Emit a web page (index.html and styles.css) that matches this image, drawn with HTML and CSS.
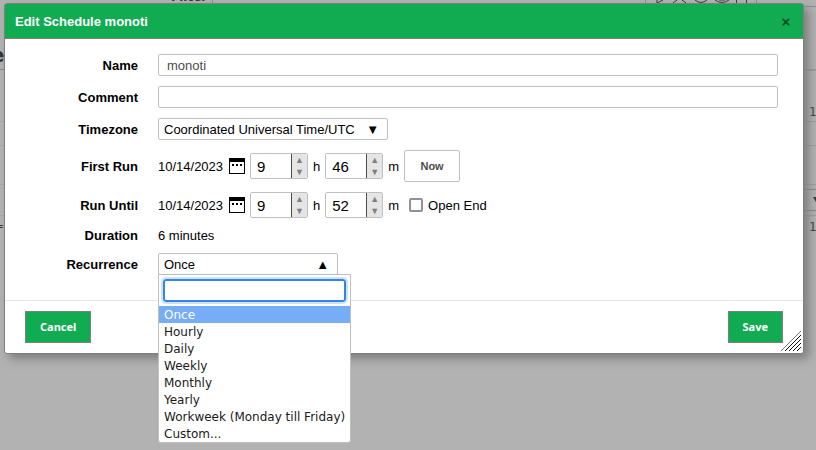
FILE: index.html
```html
<!DOCTYPE html>
<html lang="en">
<head>
<meta charset="utf-8">
<title>Edit Schedule monoti</title>
<link rel="stylesheet" href="styles.css">
</head>
<body>
<div class="backdrop" aria-hidden="true">
  <svg class="page-left" width="220" height="450">
    <path d="M212.500 0v7M0 69.500h5" stroke="#8c8c8c"/>
    <path d="M0 121.500h5M0 145.500h5M0 184.500h5M0 215.500h5" stroke="#a4a4a4"/>
    <text class="filter" x="171" y="1">Filter</text>
    <text class="heading" x="-9" y="62">e</text>
    <text class="cell" x="-6" y="230">=</text>
  </svg>
  <svg class="page-right" width="176" height="450">
    <path d="M5.500 0v7M116.500 0v7" stroke="#8c8c8c"/>
    <path d="M116 6.500h60" stroke="#8c8c8c"/>
    <path d="M17 0v3l6-3M33 3l4-3M46 3l-4-3M55 0q6 5 12 0M75 0q7 5 14 0M79 0h6M96.500 0v3M106.500 0v3" fill="none" stroke="#333"/>
    <path d="M163 70h13" stroke="#9b9b9b" stroke-width="2"/>
    <path d="M163 121.500h13M163 145.500h13M163 184.500h13M163 215.500h13" stroke="#9e9e9e"/>
    <path d="M163 189.500h13M163 210.500h13" stroke="#858585"/>
    <path d="M173 197h7l-3 7z" fill="#333"/>
    <text class="cell" x="169" y="116">1</text>
    <text class="cell" x="169" y="231">1</text>
  </svg>
</div>

<form class="dialog" role="dialog" aria-labelledby="title">
  <header class="dialog-head">
    <h1 id="title">Edit Schedule monoti</h1>
    <button type="button" class="close" aria-label="Close">×</button>
  </header>

  <div class="dialog-body">
    <div class="row">
      <label class="label" for="name">Name</label>
      <input class="text" id="name" type="text" value="monoti">
    </div>
    <div class="row">
      <label class="label" for="comment">Comment</label>
      <input class="text" id="comment" type="text">
    </div>
    <div class="row">
      <label class="label" for="timezone">Timezone</label>
      <div class="select timezone">
        <select id="timezone"><option>Coordinated Universal Time/UTC</option></select>
        <span class="arrow">▼</span>
      </div>
    </div>
    <div class="row">
      <span class="label">First Run</span>
      <div class="fields">
        <span class="date">10/14/2023</span>
        <button type="button" class="calendar" aria-label="Pick start date">
          <svg width="16" height="16"><path d="M0 0h16v16H0z"/><path d="M1 4h14v11H1z" fill="#fff"/><path d="M3 6h2v2H3zM7 6h2v2H7zM11 6h2v2h-2z"/></svg>
        </button>
        <span class="spinner"><input type="number" value="9" aria-label="Start hour"><span class="steps"><button type="button" aria-label="Increase">▲</button><button type="button" aria-label="Decrease">▼</button></span></span>
        <span class="unit">h</span>
        <span class="spinner"><input type="number" value="46" aria-label="Start minute"><span class="steps"><button type="button" aria-label="Increase">▲</button><button type="button" aria-label="Decrease">▼</button></span></span>
        <span class="unit">m</span>
        <button type="button" class="now">Now</button>
      </div>
    </div>
    <div class="row">
      <span class="label">Run Until</span>
      <div class="fields">
        <span class="date">10/14/2023</span>
        <button type="button" class="calendar" aria-label="Pick end date">
          <svg width="16" height="16"><path d="M0 0h16v16H0z"/><path d="M1 4h14v11H1z" fill="#fff"/><path d="M3 6h2v2H3zM7 6h2v2H7zM11 6h2v2h-2z"/></svg>
        </button>
        <span class="spinner"><input type="number" value="9" aria-label="End hour"><span class="steps"><button type="button" aria-label="Increase">▲</button><button type="button" aria-label="Decrease">▼</button></span></span>
        <span class="unit">h</span>
        <span class="spinner"><input type="number" value="52" aria-label="End minute"><span class="steps"><button type="button" aria-label="Increase">▲</button><button type="button" aria-label="Decrease">▼</button></span></span>
        <span class="unit">m</span>
        <label class="open-end"><input type="checkbox">Open End</label>
      </div>
    </div>
    <div class="row">
      <span class="label">Duration</span>
      <span>6 minutes</span>
    </div>
    <div class="row">
      <label class="label" for="recurrence">Recurrence</label>
      <div class="select recurrence">
        <select id="recurrence"><option>Once</option></select>
        <span class="arrow">▲</span>
        <div class="menu">
          <input class="search" type="text" aria-label="Search recurrence">
          <ul role="listbox" aria-label="Recurrence">
            <li role="option" aria-selected="true">Once</li>
            <li role="option">Hourly</li>
            <li role="option">Daily</li>
            <li role="option">Weekly</li>
            <li role="option">Monthly</li>
            <li role="option">Yearly</li>
            <li role="option">Workweek (Monday till Friday)</li>
            <li role="option">Custom...</li>
          </ul>
        </div>
      </div>
    </div>
  </div>

  <footer class="dialog-foot">
    <button type="button" class="action">Cancel</button>
    <button type="submit" class="action">Save</button>
    <svg class="grip" width="20" height="20" stroke="#111" fill="none"><path d="M0 20L20 0" stroke="#777"/><path d="M4 20L20 4M8 20L20 8M12 20L20 12M16 20L20 16"/></svg>
  </footer>
</form>
</body>
</html>
```
FILE: styles.css
```css
* {
  box-sizing: border-box;
}

body {
  margin: 0;
  min-height: 100vh;
  overflow: hidden;
  background: #b2b2b2;
  color: #000;
  font: 13px/15px "Liberation Sans", Arial, sans-serif;
}

button,
input,
select {
  margin: 0;
  font: inherit;
  color: inherit;
}

.backdrop {
  position: absolute;
  inset: 0;
  overflow: hidden;
}

.page-left,
.page-right {
  position: absolute;
  top: 0;
}

.page-left {
  left: 0;
}

.page-right {
  right: 0;
}

.backdrop text {
  fill: #333;
}

.filter {
  font: bold 12px "DejaVu Sans", sans-serif;
}

.heading {
  font: bold 20px "DejaVu Sans", sans-serif;
}

.cell {
  font: 12px "DejaVu Sans", sans-serif;
}

.dialog {
  position: relative;
  margin: 3px 12px 0 4px;
  border: 1px solid #7f7f7f;
  border-radius: 3px;
  background: #fff;
  box-shadow: 5px 5px 10px #7f7f7f;
}

.dialog-head {
  display: flex;
  align-items: center;
  justify-content: space-between;
  height: 35px;
  padding: 0 10px;
  border-bottom: 1px solid #7f7f7f;
  background: #11ab51;
  color: #fff;
}

h1 {
  margin: 0;
  font-size: 13px;
  line-height: 15px;
}

.close {
  width: 14px;
  padding: 0;
  border: 0;
  background: none;
  color: #0a4a26;
  font-size: 15px;
  font-weight: bold;
}

.dialog-body {
  display: flex;
  flex-direction: column;
  gap: 10px;
  padding: 15px 25px 25px 20px;
}

.row {
  display: flex;
  align-items: center;
  gap: 20px;
}

.label {
  width: 113px;
  flex: none;
  font-weight: bold;
  text-align: right;
}

.text {
  flex: 1;
  min-width: 0;
  height: 22px;
  padding: 0 8px;
  border: 1px solid #bfbfbf;
  border-radius: 2px;
  background: #fff;
  color: #4c4c4c;
}

.select {
  position: relative;
  height: 22px;
}

.timezone {
  width: 230px;
}

.recurrence {
  width: 180px;
}

.select select {
  appearance: none;
  width: 100%;
  height: 22px;
  padding: 0 5px;
  border: 1px solid #bfbfbf;
  border-radius: 2px;
  background: #fff;
}

.arrow {
  position: absolute;
  right: 9px;
  top: 4px;
  pointer-events: none;
}

.fields {
  display: flex;
  align-items: center;
  gap: 5px;
}

.date {
  min-width: 66px;
}

.calendar {
  display: flex;
  padding: 0;
  border: 0;
  background: none;
}

.spinner {
  display: flex;
  width: 58px;
  height: 26px;
  border: 1px solid #bfbfbf;
  border-radius: 2px;
  overflow: hidden;
}

.spinner input {
  appearance: textfield;
  flex: 1;
  min-width: 0;
  padding: 0 6px;
  border: 0;
  background: #fff;
  font-size: 15px;
}

.spinner input::-webkit-inner-spin-button {
  appearance: none;
  margin: 0;
}

.steps {
  display: flex;
  flex-direction: column;
  width: 16px;
  border-left: 1px solid #4c4c4c;
}

.steps button {
  flex: 1;
  padding: 0;
  border: 0;
  background: #e5e5e5;
  color: #7f7f7f;
  font-size: 9px;
  line-height: 11px;
}

.now {
  width: 56px;
  height: 32px;
  padding: 0;
  border: 1px solid #bfbfbf;
  border-radius: 2px;
  background: #fff;
  color: #4c4c4c;
  font-size: 11px;
  font-weight: bold;
}

.open-end {
  display: flex;
  align-items: center;
  gap: 5px;
  margin-left: 5px;
}

.open-end input {
  appearance: none;
  width: 14px;
  height: 14px;
  border: 2px solid #8f8f9d;
  border-radius: 2px;
  background: #fff;
}

.menu {
  position: absolute;
  z-index: 1;
  top: 21px;
  left: 0;
  border: 1px solid #bfbfbf;
  border-radius: 0 0 3px 3px;
  background: #fff;
  color: #1a1a1a;
  font: 12px/16px "DejaVu Sans", sans-serif;
  white-space: nowrap;
}

.search {
  display: block;
  width: calc(100% - 8px);
  height: 23px;
  margin: 4px;
  padding: 0 4px;
  border: 2px solid #3584e4;
  border-radius: 3px;
  outline: 2px solid #cde3fb;
  background: #fff;
}

.menu ul {
  margin: 0;
  padding: 0;
  list-style: none;
}

.menu li {
  padding: 1px 5px 0;
}

.menu li[aria-selected="true"] {
  background: #77acf7;
  color: #fff;
}

.dialog-foot {
  position: relative;
  display: flex;
  justify-content: space-between;
  padding: 10px 20px;
  border-top: 1px solid #e5e5e5;
}

.action {
  height: 32px;
  padding: 0 14px 1px;
  border: 1px solid #7f7f7f;
  background: #11ab51;
  color: #fff;
  font: bold 11px "Noto Sans", sans-serif;
}

.grip {
  position: absolute;
  right: 2px;
  bottom: 2px;
}
```
